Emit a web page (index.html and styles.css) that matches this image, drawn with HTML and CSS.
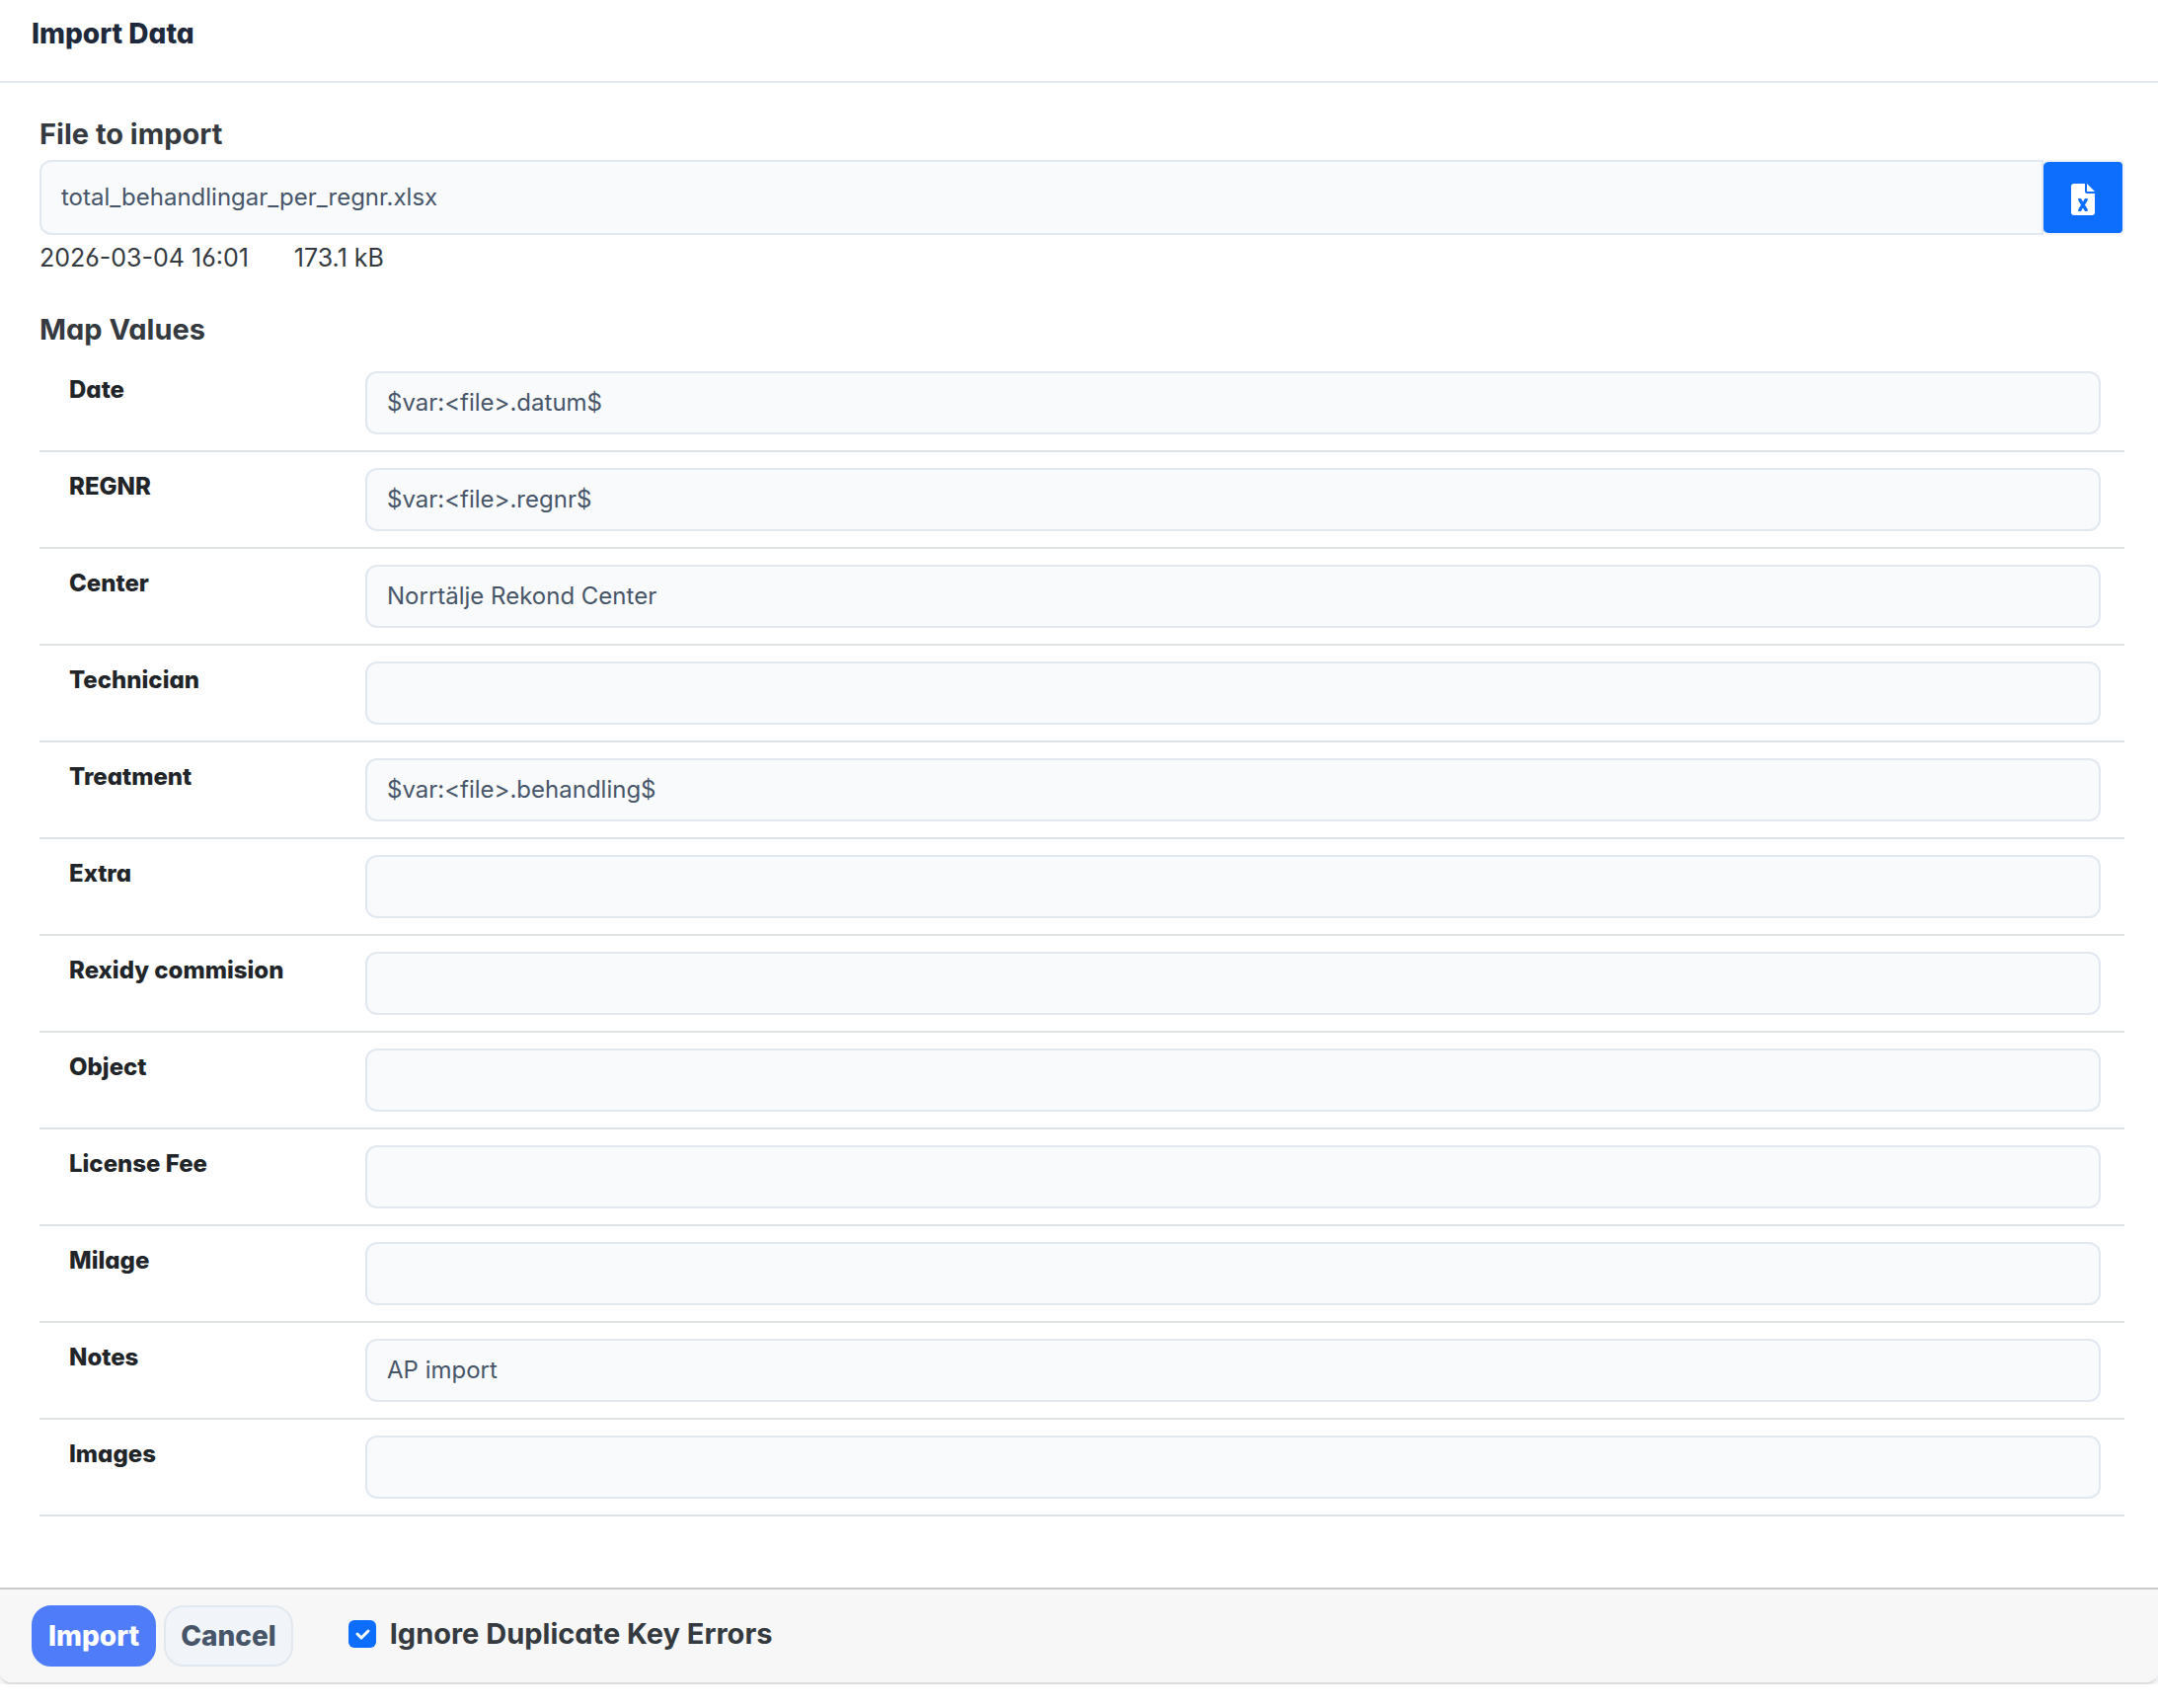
FILE: index.html
```html
<!DOCTYPE html>
<html lang="en">
<head>
<meta charset="utf-8">
<meta name="viewport" content="width=device-width, initial-scale=1">
<title>Import Data</title>
<link rel="stylesheet" href="styles.css">
</head>
<body>
<form class="dialog">
  <header class="dialog-header">
    <h1 class="dialog-title">Import Data</h1>
  </header>
  <main class="dialog-body">
    <label class="section-title" for="file">File to import</label>
    <div class="file-picker">
      <input class="field file-name" id="file" type="text" value="total_behandlingar_per_regnr.xlsx" readonly>
      <button class="file-button" type="button" aria-label="Choose file">
        <svg class="file-icon" viewBox="0 0 24 32" aria-hidden="true">
          <path fill="currentColor" fill-rule="evenodd" d="M3 0H14V8Q14 10 16 10H24V29Q24 32 21 32H3Q0 32 0 29V3Q0 0 3 0ZM8 15Q6.500 15 7.200 16.700L10 21.500L7.200 26.300Q6.500 28 8 28H9.200Q10.200 28 10.700 27L12 24.600L13.300 27Q13.800 28 14.800 28H16Q17.500 28 16.800 26.300L14 21.500L16.800 16.700Q17.500 15 16 15H14.800Q13.800 15 13.300 16L12 18.400L10.700 16Q10.200 15 9.200 15Z"/>
          <path fill="currentColor" d="M16 0L24 8H16Z"/>
        </svg>
      </button>
    </div>
    <div class="file-meta"><span>2026-03-04 16:01</span><span>173.1 kB</span></div>
    <h2 class="section-title map-title">Map Values</h2>
    <table class="map">
      <tbody>
        <tr><th scope="row"><label for="date">Date</label></th><td><input class="field" id="date" type="text" value="$var:&lt;file&gt;.datum$"></td></tr>
        <tr><th scope="row"><label for="regnr">REGNR</label></th><td><input class="field" id="regnr" type="text" value="$var:&lt;file&gt;.regnr$"></td></tr>
        <tr><th scope="row"><label for="center">Center</label></th><td><input class="field" id="center" type="text" value="Norrtälje Rekond Center"></td></tr>
        <tr><th scope="row"><label for="technician">Technician</label></th><td><input class="field" id="technician" type="text"></td></tr>
        <tr><th scope="row"><label for="treatment">Treatment</label></th><td><input class="field" id="treatment" type="text" value="$var:&lt;file&gt;.behandling$"></td></tr>
        <tr><th scope="row"><label for="extra">Extra</label></th><td><input class="field" id="extra" type="text"></td></tr>
        <tr><th scope="row"><label for="commision">Rexidy commision</label></th><td><input class="field" id="commision" type="text"></td></tr>
        <tr><th scope="row"><label for="object">Object</label></th><td><input class="field" id="object" type="text"></td></tr>
        <tr><th scope="row"><label for="license">License Fee</label></th><td><input class="field" id="license" type="text"></td></tr>
        <tr><th scope="row"><label for="milage">Milage</label></th><td><input class="field" id="milage" type="text"></td></tr>
        <tr><th scope="row"><label for="notes">Notes</label></th><td><input class="field" id="notes" type="text" value="AP import"></td></tr>
        <tr><th scope="row"><label for="images">Images</label></th><td><input class="field" id="images" type="text"></td></tr>
      </tbody>
    </table>
  </main>
  <footer class="dialog-footer">
    <button class="button button-primary" type="submit">Import</button>
    <button class="button button-secondary" type="button">Cancel</button>
    <div class="option">
      <input class="checkbox" id="ignore" type="checkbox" checked>
      <label for="ignore">Ignore Duplicate Key Errors</label>
    </div>
  </footer>
</form>
</body>
</html>
```
FILE: styles.css
```css
*,
*::before,
*::after {
  box-sizing: border-box;
}

body {
  margin: 0;
  background: #fff;
  color: #212529;
  font-family: Inter, "Liberation Sans", sans-serif;
  font-size: 24px;
  line-height: 36px;
  font-feature-settings: "cv03", "cv04", "cv11";
}

.dialog {
  background: #fff;
  border-bottom: 2px solid #dcdddf;
  border-radius: 0 0 12px 12px;
  box-shadow: 0 2px 8px rgba(30, 60, 80, 0.16);
}

.dialog-header {
  padding: 12px 32px 26px;
  border-bottom: 2px solid #e2e8f0;
}

.dialog-title {
  margin: 0;
  color: #1e293b;
  font-size: 28px;
  font-weight: 800;
  line-height: 44px;
}

.dialog-body {
  padding: 28px 34px 72px 40px;
}

.section-title {
  display: block;
  margin: 0;
  padding-bottom: 2px;
  color: #343a40;
  font-size: 29px;
  font-weight: 700;
  line-height: 48px;
}

.map-title {
  margin-top: 31px;
}

.field {
  display: block;
  width: 100%;
  height: 64px;
  margin: 0;
  padding: 0 20px 2px;
  border: 2px solid #e2e8f0;
  border-radius: 12px;
  background: #f8fafc;
  color: #475569;
  font-family: inherit;
  font-size: 24px;
}

.file-picker {
  display: flex;
}

.file-name {
  flex: 1;
  height: 76px;
  border-radius: 12px 0 0 12px;
}

.file-button {
  display: flex;
  align-items: center;
  justify-content: center;
  width: 82px;
  padding: 4px 0 0;
  border: 2px solid #eef1f5;
  border-left: 0;
  border-radius: 6px;
  background: #0d6efd;
  color: #fff;
}

.file-icon {
  width: 24px;
  height: 32px;
}

.file-meta {
  display: flex;
  gap: 46px;
  padding-top: 5px;
  color: #343a40;
  font-size: 25px;
}

.map {
  width: 100%;
  border-collapse: separate;
  border-spacing: 0;
}

.map th,
.map td {
  border-bottom: 2px solid #dee2e6;
  vertical-align: top;
}

.map th {
  width: 330px;
  padding: 17px 0 0 30px;
  text-align: left;
  font-weight: 800;
}

.map td {
  padding: 16px 24px 16px 0;
}

.dialog-footer {
  display: flex;
  align-items: center;
  gap: 8px;
  padding: 16px 32px;
  border-top: 2px solid #c8c9ca;
  border-radius: 0 0 12px 12px;
  background: #f7f7f7;
}

.button {
  height: 62px;
  padding: 0 15px;
  border: 2px solid transparent;
  border-radius: 20px;
  font-family: inherit;
  font-size: 28px;
  font-weight: 800;
}

.button-primary {
  border-color: #4f7df9;
  background: #4f7df9;
  color: #fff;
}

.button-secondary {
  border-color: #e2e8f0;
  background: #f1f5f9;
  color: #475569;
}

.option {
  display: flex;
  align-items: center;
  gap: 14px;
  margin-left: 48px;
  padding-bottom: 5px;
  color: #343a40;
  font-size: 29px;
  font-weight: 700;
}

.checkbox {
  appearance: none;
  width: 28px;
  height: 28px;
  margin: 0;
  border-radius: 6px;
  background: #0d6efd;
}

.checkbox:checked {
  background: #0d6efd url("data:image/svg+xml,%3Csvg xmlns='http://www.w3.org/2000/svg' viewBox='0 0 28 28'%3E%3Cpath fill='none' stroke='%23fff' stroke-width='3' stroke-linecap='round' stroke-linejoin='round' d='M9 14l4 4l7-7'/%3E%3C/svg%3E") center / 28px no-repeat;
}
```
